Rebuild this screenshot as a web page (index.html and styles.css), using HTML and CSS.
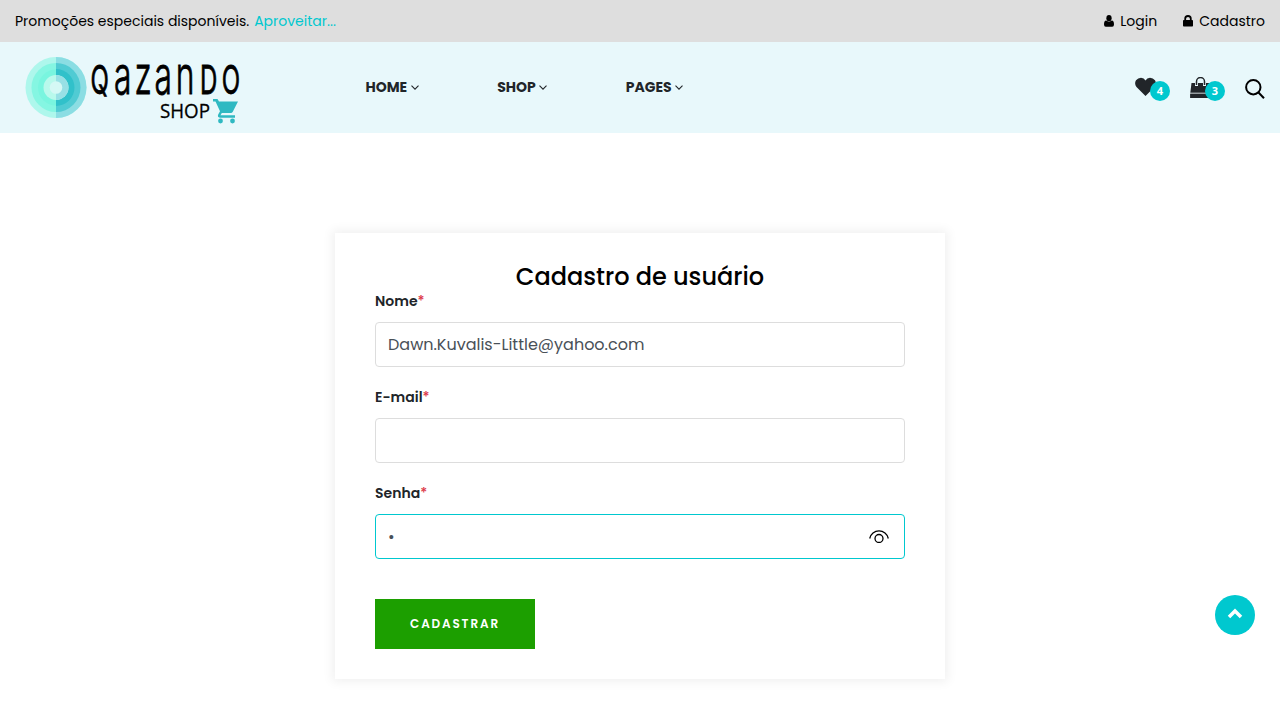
FILE: index.html
```html
<!DOCTYPE html>
<html lang="pt-BR">
<head>
<meta charset="utf-8">
<title>Qazando Shop</title>
<link rel="stylesheet" href="styles.css">
</head>
<body>
<div class="topbar">
  <p class="promo"><span class="promo-text">Promoções especiais disponíveis.</span><a class="promo-link">Aproveitar...</a></p>
  <div class="account">
    <a class="account-link"><svg width="10" height="12" viewBox="0 0 11 13" preserveAspectRatio="none"><ellipse cx="5.5" cy="3.5" rx="2.9" ry="3.4"/><path d="M2.4 6q3.1 2.500 6.200 0Q11 6.300 11 10.200 11 12.600 9 12.600H2Q0 12.600 0 10.200 0 6.300 2.400 6"/></svg><span>Login</span></a>
    <a class="account-link"><svg class="lock" width="10" height="12" viewBox="0 0 10 12"><path d="M2.200 6V3.800a2.800 2.800 0 0 1 5.600 0V6" fill="none" stroke="#000" stroke-width="1.800"/><rect y="5" width="10" height="6.500" rx=".8"/></svg><span>Cadastro</span></a>
  </div>
</div>
<header class="header">
  <svg class="logo" width="216" height="70" viewBox="25 55 216 70">
    <g fill="#74f5de"><circle cx="56" cy="87.500" r="30.500" opacity=".5"/><circle cx="56" cy="87.500" r="24.500" opacity=".7"/><circle cx="56" cy="87.500" r="18" opacity=".7"/></g>
    <path d="M56 57a30.500 30.500 0 0 1 0 61" fill="#8bdde3"/><path d="M56 63a24.500 24.500 0 0 1 0 49" fill="#50cbd3"/><path d="M56 69a18.500 18.500 0 0 1 0 37" fill="#31c1ca"/>
    <circle cx="56" cy="87.500" r="12.500" fill="#b9f9ec"/><path d="M56 75a12.500 12.500 0 0 1 0 25" fill="#98e0e5"/><circle cx="56" cy="87.500" r="6.300" fill="#d5f8f5"/>
    <g class="logo-name" transform="translate(0 93.800) scale(.6 1)"><text class="logo-cap" x="151">Q</text><text class="logo-low" x="190 224 257.500 293">azan</text><text class="logo-cap" x="333.500 369.500">DO</text></g>
    <text class="logo-shop" x="160" y="118" textLength="50" lengthAdjust="spacingAndGlyphs">SHOP</text>
    <g fill="#2fb9c2"><path d="M213 99h4.500l1.500 2.500h19l-5.200 10.200q-.7 1.300-2 1.300h-9l-1.300 2.300H235v2.400h-15q-3-.5-1.700-3.500l1.700-3-4.500-9.800H213z"/><circle cx="220.500" cy="121" r="2.400"/><circle cx="232.500" cy="121" r="2.400"/></g>
  </svg>
  <nav class="nav">
    <a class="nav-item"><span>HOME</span><svg width="8" height="5" viewBox="0 0 8 5"><path d="M.5.7 4 4.200 7.500.7"/></svg></a>
    <a class="nav-item"><span>SHOP</span><svg width="8" height="5" viewBox="0 0 8 5"><path d="M.5.7 4 4.200 7.500.7"/></svg></a>
    <a class="nav-item"><span>PAGES</span><svg width="8" height="5" viewBox="0 0 8 5"><path d="M.5.7 4 4.200 7.500.7"/></svg></a>
  </nav>
  <div class="tools">
    <a class="tool"><svg width="21" height="20" viewBox="0 0 21 19"><path d="M10.500 18.500 1.500 9.500Q-1 6 1 2.800 3 .2 6 .2 9 .3 10.500 3 12 .3 15 .2 18 .2 20 2.800 22 6 19.500 9.500z" fill="#212529"/></svg><span class="count">4</span></a>
    <a class="tool"><svg width="21" height="21" viewBox="0 0 21 21"><path d="M1.500 6h18l1.200 9.800H.3zM.1 17.100h20.800V21H.1z" fill="#212529"/><path d="M.2 16.400h20.600" stroke="#8b9194" stroke-width="1"/><path d="M6.500 9V5a4 4 0 0 1 8 0v4" fill="none" stroke="#e8f8fb" stroke-width="3"/><path d="M6.500 8V4.500a4 4 0 0 1 8 0V8" fill="none" stroke="#212529" stroke-width="1.500"/></svg><span class="count">3</span></a>
    <svg class="search" width="20" height="20" viewBox="0 0 20 20"><circle cx="8.300" cy="8.200" r="7.200"/><path d="m13.500 13.500 5.500 5.700"/></svg>
  </div>
</header>
<main class="main">
  <form class="card">
    <h1 class="title">Cadastro de usuário</h1>
    <label class="label"><span>Nome</span><b>*</b></label>
    <div class="field"><span>Dawn.Kuvalis-Little@yahoo.com</span></div>
    <label class="label"><span>E-mail</span><b>*</b></label>
    <div class="field"></div>
    <label class="label"><span>Senha</span><b>*</b></label>
    <div class="field focused"><span>•</span><svg width="20" height="13" viewBox="0 0 20 13"><path d="M.7 8.500a9.500 9.500 0 0 1 18.600 0"/><circle cx="10" cy="8.500" r="4"/></svg></div>
    <div class="submit"><span>CADASTRAR</span></div>
  </form>
</main>
<a class="to-top"><svg width="16" height="11" viewBox="0 0 16 11"><path d="m2 9 6-6 6 6"/></svg></a>
</body>
</html>
```

FILE: styles.css
```css
* { box-sizing: border-box; }
body { margin: 0; height: 720px; overflow: hidden; background: #fff; color: #000; font-family: Poppins, Inter, sans-serif; font-size: 14px; }
svg { display: block; flex: none; }
.topbar { height: 42px; padding: 0 15px; background: #dedede; display: flex; justify-content: space-between; align-items: center; }
.promo { margin: 0; display: flex; gap: 5px; }
.promo-link { color: #00c8cf; }
.account { display: flex; gap: 26px; }
.account-link { display: flex; align-items: center; gap: 6px; }
.header { height: 91px; background: #e8f8fb; display: flex; align-items: center; padding: 0 15px 0 25px; }
.logo { overflow: visible; margin-top: 4px; }
.nav { display: flex; margin-left: 124.5px; color: #212529; font-weight: 700; gap: 78.500px; }
.nav-item { display: flex; align-items: center; gap: 3.500px; }
.nav-item svg path { fill: none; stroke: #212529; stroke-width: 1.1; }
.tools { display: flex; align-items: center; gap: 20px; margin-left: auto; }
.tool { position: relative; width: 35px; height: 21px; }
.count { position: absolute; right: 0; top: 4px; width: 20px; height: 20px; border-radius: 50%; background: #00c8cf; color: #fff; font: 700 11px/20px "Open Sans", sans-serif; text-align: center; }
.search { fill: none; stroke: #000; stroke-width: 2; margin-top: 3px; }
.logo-name { fill: #000; }
.logo-cap { font: 400 40px Inter, sans-serif; stroke: #000; stroke-width: .8; }
.logo-low { font: 300 53px Inter, sans-serif; stroke: #000; stroke-width: .9; }
.logo-shop { font: 400 20px "Open Sans", sans-serif; stroke: #000; stroke-width: .3; }
.main { display: flex; justify-content: center; padding-top: 100px; }
.card { width: 610px; height: 446px; padding: 29px 40px 30px; box-shadow: 0 0 10px 3px rgba(0,0,0,.06); display: flex; flex-direction: column; }
.title { margin: 0; text-align: center; font-size: 24px; line-height: 30px; font-weight: 500; }
.label { display: flex; height: 18px; line-height: 18px; font-weight: 600; color: #212529; }
.label b { color: #dc3545; font-weight: 500; }
.field { height: 45px; margin: 12px 0 21px; flex: none; display: flex; align-items: center; justify-content: space-between; padding: 0 15px 0 12px; border: 1px solid #ddd; border-radius: 4px; font-size: 16px; color: #495057; }
.focused { border-color: #00c8cf; margin-bottom: 40px; }
.focused svg { fill: none; stroke: #000; stroke-width: 1.3; }
.submit { width: 160px; height: 50px; display: flex; align-items: center; justify-content: center; background: #1c9f00; color: #fff; font-size: 12px; font-weight: 600; letter-spacing: 1.85px; }
.to-top { position: fixed; left: 1215px; top: 595px; width: 40px; height: 40px; border-radius: 50%; background: #00c8cf; display: flex; align-items: center; justify-content: center; padding-bottom: 3px; }
.to-top path { fill: none; stroke: #fff; stroke-width: 3.5; }
```
